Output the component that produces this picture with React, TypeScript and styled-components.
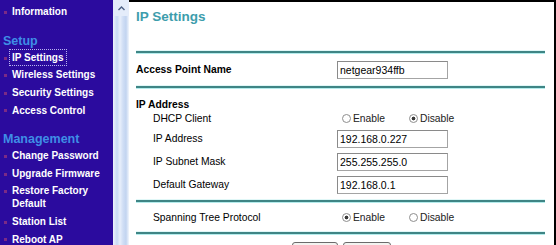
import styled, { createGlobalStyle } from "styled-components";

const GlobalStyle = createGlobalStyle`
    html, body {
        margin: 0;
        padding: 0;
        overflow: hidden;
        background: #ffffff;
    }
    body {
        font-family: "Liberation Sans", Arial, sans-serif;
    }
`;

const Page = styled.div`
    display: flex;
    width: 556px;
    height: 245px;
    overflow: hidden;
`;

const SideFrame = styled.div`
    display: flex;
    width: 129px;
    flex-shrink: 0;
`;

const Menu = styled.nav`
    width: 113px;
    padding-top: 3px;
    background: #2b0b9e;
    display: flex;
    flex-direction: column;
`;

const MenuHeading = styled.div`
    padding: 12px 0 0 3px;
    line-height: 16px;
    font-size: 12.5px;
    font-weight: 700;
    color: #3f8ee6;
`;

const MenuItem = styled.a<{ $active?: boolean }>`
    position: relative;
    display: block;
    padding: 2.3px 0 2.3px 12px;
    line-height: 13px;
    font-size: 10px;
    font-weight: 700;
    color: #ffffff;
    text-decoration: none;

    &::before {
        content: "";
        position: absolute;
        left: 4px;
        top: 8px;
        width: 3px;
        height: 3px;
        background: #7b2a86;
    }

    span {
        outline: ${p => (p.$active ? "1px dotted #b9b4f0" : "none")};
        outline-offset: 2px;
    }
`;

const ScrollBar = styled.div`
    width: 16px;
    display: flex;
    flex-direction: column;
    background: linear-gradient(
        to right,
        #eef3fc 0px,
        #dbe6f8 2px,
        #c9daf4 4px,
        #e8effb 7px,
        #d0def5 10px,
        #c2d4f0 13px,
        #f2f6fd 16px
    );
`;

const ArrowButton = styled.div`
    height: 16px;
    display: flex;
    align-items: center;
    justify-content: center;
    background: #e4ecfa;
`;

const Main = styled.main`
    flex: 1;
    border-top: 2px solid #000000;
    border-right: 2px solid #000000;
    padding: 7px 9px 0 7px;
    font-size: 10.3px;
    color: #000000;
`;

const Title = styled.h1`
    margin: 0 0 26px;
    line-height: 16px;
    font-size: 13.5px;
    font-weight: 700;
    color: #3d9dac;
`;

const Rule = styled.div`
    height: 2px;
    margin: 0;
    background: #3f8585;
    box-shadow: 0 1px 0 #b4ecec, 0 -1px 0 #e0f7f7;
`;

const Row = styled.div<{ $h: number; $indent?: boolean; $bold?: boolean; $bottom?: boolean }>`
    display: flex;
    align-items: ${p => (p.$bottom ? "flex-end" : "center")};
    height: ${p => p.$h}px;
    padding-left: ${p => (p.$indent ? 17 : 0)}px;
    font-weight: ${p => (p.$bold ? 700 : 400)};
`;

const Label = styled.div<{ $indent?: boolean }>`
    width: ${p => (p.$indent ? 184 : 201)}px;
    flex-shrink: 0;
`;

const Field = styled.input`
    box-sizing: border-box;
    width: 111px;
    height: 18px;
    margin: 0;
    padding: 0 2px;
    border: 1px solid #a4a4a4;
    border-top-color: #8a8a8a;
    border-left-color: #8a8a8a;
    font-family: "Liberation Sans", Arial, sans-serif;
    font-size: 10.5px;
    color: #000000;
    outline: none;
`;

const RadioGroup = styled.div`
    display: flex;
    align-items: center;
    padding-left: 5px;
`;

const RadioOption = styled.label`
    display: flex;
    align-items: center;
    gap: 2px;
    width: 67px;
    color: #222222;
`;

const RadioDot = styled.span<{ $on?: boolean }>`
    box-sizing: border-box;
    width: 9px;
    height: 9px;
    border-radius: 50%;
    border: 1px solid #8e8e8e;
    background: ${p =>
        p.$on
            ? "radial-gradient(circle, #3a3a3a 0 1.6px, #ffffff 2.2px)"
            : "#ffffff"};
`;

const Buttons = styled.div`
    display: flex;
    justify-content: center;
    gap: 5px;
    margin-top: 8px;
    padding-left: 2px;
`;

const Button = styled.button<{ $w: number }>`
    width: ${p => p.$w}px;
    height: 22px;
    padding: 6px 0 0;
    border: 1px solid #6b6b6b;
    border-radius: 3px;
    background: #f3f3f0;
    font-family: "Liberation Sans", Arial, sans-serif;
    font-size: 10px;
    line-height: 12px;
`;

function Radios({ on }: { on: "enable" | "disable" }) {
    return (
        <RadioGroup>
            <RadioOption>
                <RadioDot $on={on === "enable"} />
                Enable
            </RadioOption>
            <RadioOption>
                <RadioDot $on={on === "disable"} />
                Disable
            </RadioOption>
        </RadioGroup>
    );
}

function App() {
    return (
        <>
            <GlobalStyle />
            <Page>
                <SideFrame>
                    <Menu>
                        <MenuItem href="#"><span>Information</span></MenuItem>
                        <MenuHeading>Setup</MenuHeading>
                        <MenuItem href="#" $active><span>IP Settings</span></MenuItem>
                        <MenuItem href="#"><span>Wireless Settings</span></MenuItem>
                        <MenuItem href="#"><span>Security Settings</span></MenuItem>
                        <MenuItem href="#"><span>Access Control</span></MenuItem>
                        <MenuHeading>Management</MenuHeading>
                        <MenuItem href="#"><span>Change Password</span></MenuItem>
                        <MenuItem href="#"><span>Upgrade Firmware</span></MenuItem>
                        <MenuItem href="#"><span>Restore Factory Default</span></MenuItem>
                        <MenuItem href="#"><span>Station List</span></MenuItem>
                        <MenuItem href="#"><span>Reboot AP</span></MenuItem>
                    </Menu>
                    <ScrollBar>
                        <ArrowButton>
                            <svg width="7" height="5" viewBox="0 0 7 5">
                                <path d="M0.5 4 L3.5 1 L6.5 4" fill="none" stroke="#4d6185" strokeWidth="1.4" />
                            </svg>
                        </ArrowButton>
                    </ScrollBar>
                </SideFrame>
                <Main>
                    <Title>IP Settings</Title>
                    <Rule />
                    <Row $h={33} $bold>
                        <Label>Access Point Name</Label>
                        <Field defaultValue="netgear934ffb" />
                    </Row>
                    <Rule />
                    <Row $h={22} $bold $bottom>
                        IP Address
                    </Row>
                    <Row $h={17} $indent>
                        <Label $indent>DHCP Client</Label>
                        <Radios on="disable" />
                    </Row>
                    <Row $h={23} $indent>
                        <Label $indent>IP Address</Label>
                        <Field defaultValue="192.168.0.227" />
                    </Row>
                    <Row $h={23} $indent>
                        <Label $indent>IP Subnet Mask</Label>
                        <Field defaultValue="255.255.255.0" />
                    </Row>
                    <Row $h={23} $indent>
                        <Label $indent>Default Gateway</Label>
                        <Field defaultValue="192.168.0.1" />
                    </Row>
                    <Row $h={4} />
                    <Rule />
                    <Row $h={30} $indent>
                        <Label $indent>Spanning Tree Protocol</Label>
                        <Radios on="enable" />
                    </Row>
                    <Rule />
                    <Buttons>
                        <Button $w={46}>Apply</Button>
                        <Button $w={48}>Cancel</Button>
                    </Buttons>
                </Main>
            </Page>
        </>
    );
}

export default App;
